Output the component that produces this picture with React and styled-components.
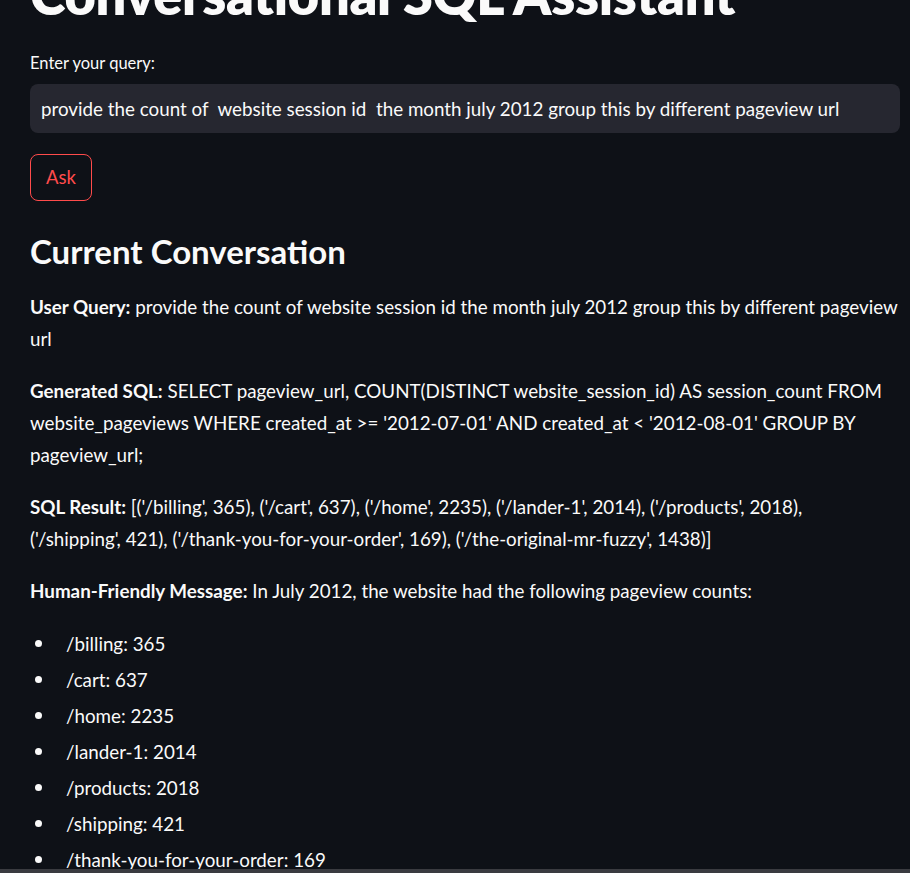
import styled, { createGlobalStyle } from "styled-components";

const GlobalStyle = createGlobalStyle`
  html, body {
    margin: 0;
    padding: 0;
    background: #0e1117;
    overflow: hidden;
  }
  * {
    box-sizing: border-box;
  }
`;

const Page = styled.div`
  height: 100vh;
  display: flex;
  flex-direction: column;
  background: #0e1117;
  color: #fafafa;
  font-family: Lato, "Noto Sans", sans-serif;
`;

const Main = styled.main`
  flex: 1;
  overflow: hidden;
  padding: 0 10px 0 30px;
`;

const ScrollTrack = styled.div`
  height: 4px;
  background: #3a3b40;
`;

const Title = styled.h1`
  margin: -37px 0 0;
  font-size: 54px;
  font-weight: 800;
  line-height: 1.2;
  letter-spacing: -0.3px;
`;

const Label = styled.label`
  display: block;
  margin-top: 25px;
  font-size: 16.5px;
  line-height: 20px;
`;

const QueryInput = styled.div`
  margin-top: 11px;
  height: 49px;
  border-radius: 8px;
  background: #262730;
  display: flex;
  align-items: center;
  padding: 0 11px;
  font-size: 18.8px;
  white-space: nowrap;
`;

const AskButton = styled.button`
  display: block;
  margin-top: 21px;
  height: 47px;
  padding: 0 15px;
  border: 1px solid #ff4b4b;
  border-radius: 8px;
  background: transparent;
  color: #ff4b4b;
  font-family: inherit;
  font-size: 18.5px;
`;

const SectionTitle = styled.h2`
  margin: 30px 0 3px;
  font-size: 33px;
  font-weight: 700;
  line-height: 40px;
`;

const Paragraph = styled.p`
  margin: 20px 0 0;
  font-size: 18.8px;
  line-height: 32px;
`;

const Tuple = styled.span`
  white-space: nowrap;
`;

const ResultList = styled.ul`
  margin: 21px 0 0;
  padding: 0;
  list-style: none;
  font-size: 18.8px;
  line-height: 32px;
`;

const ResultItem = styled.li`
  display: flex;
  align-items: center;
  margin-bottom: 4px;
  &::before {
    content: "";
    width: 7px;
    height: 7px;
    border-radius: 50%;
    background: #fafafa;
    margin: 0 24px 0 5px;
  }
`;

const counts = [
  ["/billing", 365],
  ["/cart", 637],
  ["/home", 2235],
  ["/lander-1", 2014],
  ["/products", 2018],
  ["/shipping", 421],
  ["/thank-you-for-your-order", 169],
  ["/the-original-mr-fuzzy", 1438],
];

export default function App() {
  return (
    <>
      <GlobalStyle />
      <Page>
        <Main>
          <Title>Conversational SQL Assistant</Title>
          <Label>Enter your query:</Label>
          <QueryInput>
            provide the count of&nbsp; website session id&nbsp; the month july 2012 group this by different pageview url
          </QueryInput>
          <AskButton>Ask</AskButton>
          <SectionTitle>Current Conversation</SectionTitle>
          <Paragraph>
            <strong>User Query:</strong> provide the count of website session id the month july 2012 group this by different pageview url
          </Paragraph>
          <Paragraph>
            <strong>Generated SQL:</strong> SELECT pageview_url, COUNT(DISTINCT website_session_id) AS session_count FROM website_pageviews WHERE created_at &gt;= '2012-07-01' AND created_at &lt; '2012-08-01' GROUP BY pageview_url;
          </Paragraph>
          <Paragraph>
            <strong>SQL Result:</strong> [
            {counts.map(([url, n], i) => (
              <span key={url}>
                <Tuple>
                  ('{url}', {n}){i < counts.length - 1 ? "," : "]"}
                </Tuple>{" "}
              </span>
            ))}
          </Paragraph>
          <Paragraph>
            <strong>Human-Friendly Message:</strong> In July 2012, the website had the following pageview counts:
          </Paragraph>
          <ResultList>
            {counts.map(([url, n]) => (
              <ResultItem key={url}>
                {url}: {n}
              </ResultItem>
            ))}
          </ResultList>
        </Main>
        <ScrollTrack />
      </Page>
    </>
  );
}
